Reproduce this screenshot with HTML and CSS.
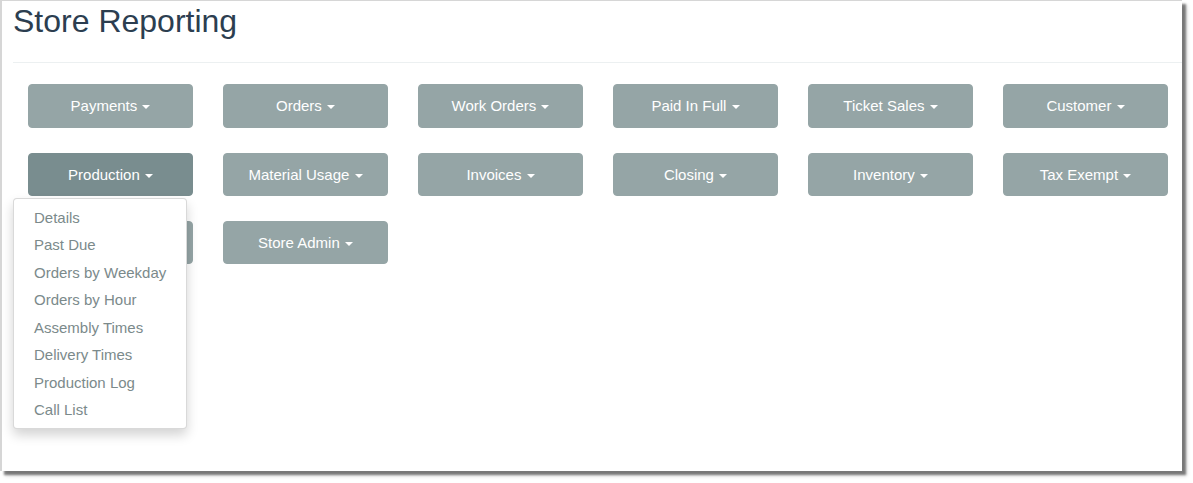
FILE: index.html
```html
<!DOCTYPE html>
<html>
<head>
<meta charset="utf-8">
<title>Store Reporting</title>
<link rel="stylesheet" href="styles.css">
</head>
<body>
<div class="window">
  <div class="page">
    <h1 class="title">Store Reporting</h1>
    <hr class="rule">
    <div class="grid">
      <div class="cell"><button class="btn">Payments <span class="caret"></span></button></div>
      <div class="cell"><button class="btn">Orders <span class="caret"></span></button></div>
      <div class="cell"><button class="btn">Work Orders <span class="caret"></span></button></div>
      <div class="cell"><button class="btn">Paid In Full <span class="caret"></span></button></div>
      <div class="cell"><button class="btn">Ticket Sales <span class="caret"></span></button></div>
      <div class="cell"><button class="btn">Customer <span class="caret"></span></button></div>
      <div class="cell open">
        <button class="btn active">Production <span class="caret"></span></button>
        <ul class="menu">
          <li><a href="#">Details</a></li>
          <li><a href="#">Past Due</a></li>
          <li><a href="#">Orders by Weekday</a></li>
          <li><a href="#">Orders by Hour</a></li>
          <li><a href="#">Assembly Times</a></li>
          <li><a href="#">Delivery Times</a></li>
          <li><a href="#">Production Log</a></li>
          <li><a href="#">Call List</a></li>
        </ul>
      </div>
      <div class="cell"><button class="btn">Material Usage <span class="caret"></span></button></div>
      <div class="cell"><button class="btn">Invoices <span class="caret"></span></button></div>
      <div class="cell"><button class="btn">Closing <span class="caret"></span></button></div>
      <div class="cell"><button class="btn">Inventory <span class="caret"></span></button></div>
      <div class="cell"><button class="btn">Tax Exempt <span class="caret"></span></button></div>
      <div class="cell"><button class="btn covered"></button></div>
      <div class="cell"><button class="btn">Store Admin <span class="caret"></span></button></div>
    </div>
  </div>
</div>
</body>
</html>
```

FILE: styles.css
```css
html, body {
  margin: 0;
  padding: 0;
  background: #ffffff;
}

body {
  font-family: "Liberation Sans", Arial, sans-serif;
  font-size: 15px;
  padding-bottom: 12px;
  min-height: 471px;
}

.window {
  width: 1180px;
  height: 470px;
  border-left: 2px solid #d6d6d6;
  border-top: 1px solid #d6d6d6;
  background: #ffffff;
  box-shadow: 4px 4px 2px rgba(0, 0, 0, 0.45), 5px 5px 4px rgba(0, 0, 0, 0.15);
}

.page {
  padding-left: 11px;
}

.title {
  margin: 3px 0 0 0;
  font-size: 32px;
  font-weight: 400;
  line-height: 1.1;
  color: #2c3e50;
}

.rule {
  margin: 23px 0 21px 0;
  border: 0;
  border-top: 1px solid #ecf0f1;
  height: 0;
}

.grid {
  display: grid;
  grid-template-columns: repeat(6, 165px);
  column-gap: 30px;
  row-gap: 25px;
  padding-left: 15px;
}

.cell {
  position: relative;
}

.btn {
  display: block;
  width: 165px;
  padding: 10px 15px;
  border: 1px solid #95a5a6;
  border-radius: 4px;
  background: #95a5a6;
  color: #ffffff;
  font-family: "Liberation Sans", Arial, sans-serif;
  font-size: 15px;
  line-height: 1.428571;
  text-align: center;
  white-space: nowrap;
}

.btn.covered {
  height: 43.43px;
}

.btn.active {
  background: #798d8f;
  border-color: #798d8f;
}

.caret {
  display: inline-block;
  width: 0;
  height: 0;
  margin-left: 1px;
  vertical-align: middle;
  border-top: 4px solid #ffffff;
  border-left: 4px solid transparent;
  border-right: 4px solid transparent;
}

.menu {
  position: absolute;
  top: 100%;
  left: -15px;
  margin: 2px 0 0 0;
  padding: 5px 0;
  list-style: none;
  background: #ffffff;
  border: 1px solid rgba(0, 0, 0, 0.15);
  border-radius: 4px;
  box-shadow: 0 6px 12px rgba(0, 0, 0, 0.175);
  white-space: nowrap;
  z-index: 10;
}

.menu a {
  display: block;
  padding: 3px 20px;
  line-height: 1.428571;
  color: #7b8a8b;
  text-decoration: none;
}
```
